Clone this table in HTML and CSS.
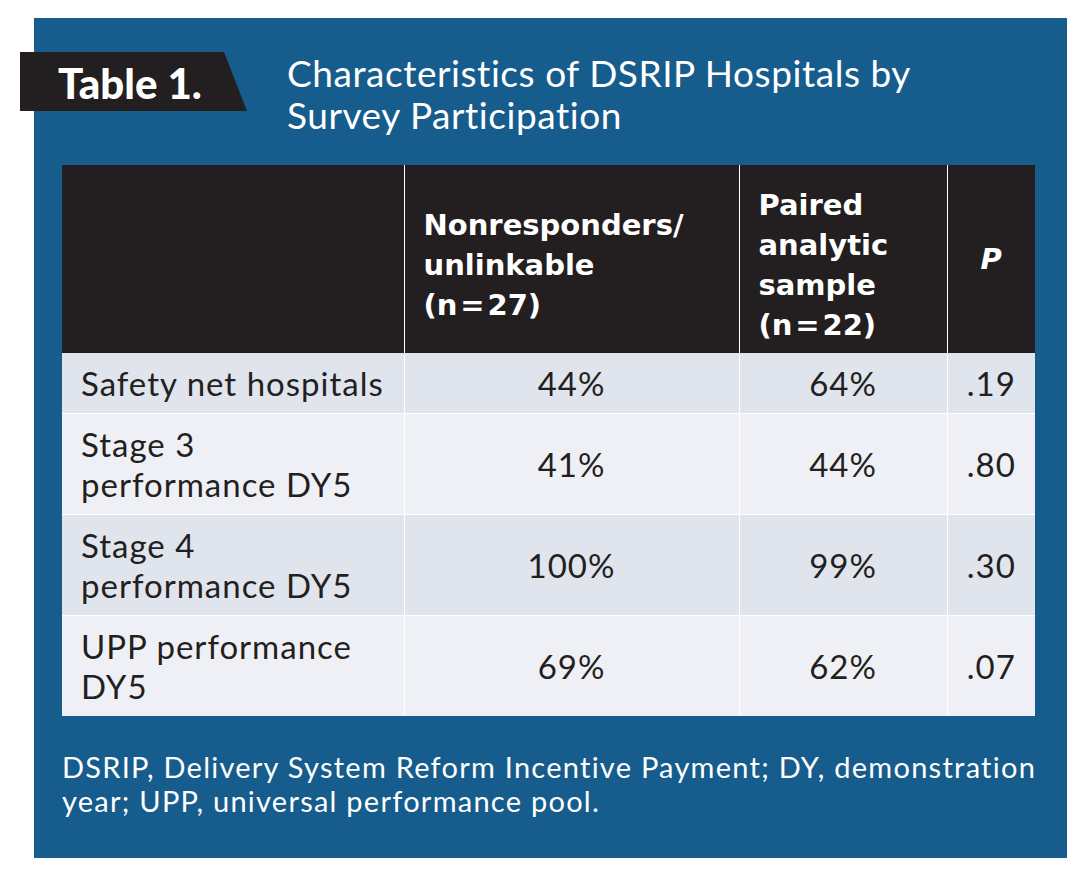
FILE: index.html
```html
<!DOCTYPE html>
<html lang="en">
<head>
<meta charset="utf-8">
<title>Table 1. Characteristics of DSRIP Hospitals by Survey Participation</title>
<link rel="stylesheet" href="styles.css">
</head>
<body>
<div class="page">
  <section class="panel">
    <header class="head">
      <div class="tag"><span>Table 1.</span></div>
      <h1 class="title">Characteristics of DSRIP Hospitals by<br>Survey Participation</h1>
    </header>
    <table class="data">
      <colgroup>
        <col class="c1"><col class="c2"><col class="c3"><col class="c4">
      </colgroup>
      <thead>
        <tr>
          <th></th>
          <th>Nonresponders/<br>unlinkable<br>(n&#8202;=&#8202;27)</th>
          <th>Paired<br>analytic<br>sample<br>(n&#8202;=&#8202;22)</th>
          <th class="p"><i>P</i></th>
        </tr>
      </thead>
      <tbody>
        <tr class="dark">
          <td class="lbl">Safety net hospitals</td><td>44%</td><td>64%</td><td>.19</td>
        </tr>
        <tr class="light">
          <td class="lbl">Stage 3<br>performance DY5</td><td>41%</td><td>44%</td><td>.80</td>
        </tr>
        <tr class="dark">
          <td class="lbl">Stage 4<br>performance DY5</td><td>100%</td><td>99%</td><td>.30</td>
        </tr>
        <tr class="light">
          <td class="lbl">UPP performance<br>DY5</td><td>69%</td><td>62%</td><td>.07</td>
        </tr>
      </tbody>
    </table>
    <p class="note">DSRIP, Delivery System Reform Incentive Payment; DY, demonstration<br>year; UPP, universal performance pool.</p>
  </section>
</div>
</body>
</html>
```

FILE: styles.css
```css
html, body {
  margin: 0;
  padding: 0;
  background: #ffffff;
}
body {
  font-family: "Lato", "Open Sans", "Liberation Sans", sans-serif;
}
.page {
  padding: 18px 21px 22px 34px;
}
.panel {
  background: #165c8c;
  width: 1033px;
  height: 840px;
  box-sizing: border-box;
  padding: 34px 32px 0 28px;
}
.head {
  display: flex;
  align-items: flex-start;
  margin-left: -42px;
}
.tag {
  width: 227px;
  height: 59px;
  background: #231f20;
  clip-path: polygon(0 0, 204px 0, 100% 100%, 0 100%);
  box-sizing: border-box;
  padding-left: 38px;
  display: flex;
  align-items: center;
  flex-shrink: 0;
}
.tag span {
  color: #ffffff;
  font-weight: 900;
  font-size: 42px;
  line-height: 1;
  margin-top: 2px;
}
.title {
  margin: 0 0 0 40px;
  color: #ffffff;
  font-weight: 400;
  font-size: 37px;
  line-height: 42px;
  letter-spacing: 0.55px;
}
.data {
  margin-top: 29px;
  width: 973px;
  table-layout: fixed;
  border-collapse: collapse;
}
.c1 { width: 342px; }
.c2 { width: 335px; }
.c3 { width: 208px; }
.c4 { width: 88px; }
.data th {
  background: #231f20;
  color: #ffffff;
  font-family: "DejaVu Sans", "Lato", sans-serif;
  font-weight: 700;
  font-size: 29px;
  line-height: 40px;
  text-align: left;
  padding: 20px 19px 8px;
  border-left: 1px solid #ffffff;
}
.data th:first-child { border-left: none; }
.data th.p {
  text-align: center;
  padding: 0;
}
.data td {
  font-size: 33px;
  line-height: 40px;
  letter-spacing: 1px;
  color: #231f20;
  text-align: center;
  padding: 10px 8px;
  border-left: 1px solid #ffffff;
  border-top: 1px solid #ffffff;
}
.data td:first-child { border-left: none; }
.data tbody tr:first-child td { border-top: none; }
.data td.lbl {
  text-align: left;
  padding-left: 19px;
}
.dark td { background: #dfe4ed; }
.light td { background: #eff0f6; }
.note {
  margin: 34px -20px 0 0;
  color: #ffffff;
  font-size: 29px;
  line-height: 34px;
  letter-spacing: 1.25px;
  white-space: nowrap;
}
```
